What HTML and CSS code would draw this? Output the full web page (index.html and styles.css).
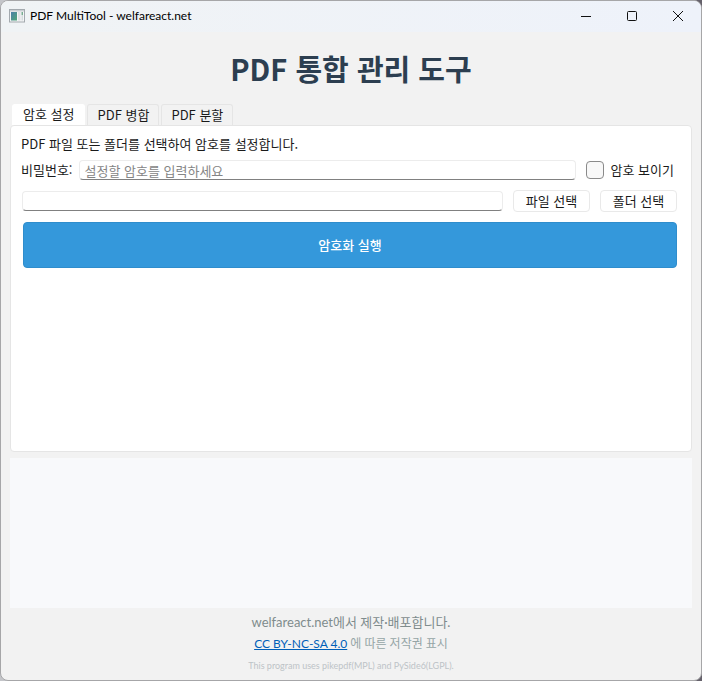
FILE: index.html
```html
<!DOCTYPE html>
<html lang="ko">
<head>
    <meta charset="UTF-8">
    <meta name="viewport" content="width=device-width, initial-scale=1.0">
    <title>PDF MultiTool - welfareact.net</title>
    <link rel="stylesheet" href="styles.css">
</head>
<body>
    <div class="window">
        <header class="titlebar">
            <svg class="app-icon" width="16" height="14" viewBox="0 0 16 14" aria-hidden="true">
                <defs>
                    <linearGradient id="screen" x1="0" y1="0" x2="1" y2="1">
                        <stop offset="0" stop-color="#4a7fa8"/>
                        <stop offset="1" stop-color="#4fa577"/>
                    </linearGradient>
                </defs>
                <rect x="0.5" y="0.5" width="15" height="12.5" fill="#f4f5f6" stroke="#a3a9ae"/>
                <rect x="1" y="1" width="14" height="1.5" fill="#c9ced2"/>
                <rect x="2" y="3" width="6" height="8.5" fill="url(#screen)"/>
                <rect x="9" y="3" width="2.5" height="8.5" fill="#dfe2e4"/>
                <rect x="12.5" y="3" width="1.5" height="3" fill="#78ad91"/>
                <rect x="12.5" y="6" width="1.5" height="5.5" fill="#d5dcdd"/>
            </svg>
            <span class="window-title">PDF MultiTool - welfareact.net</span>
            <div class="window-controls">
                <button type="button" aria-label="최소화">
                    <svg width="10" height="10" viewBox="0 0 10 10"><path d="M0 5.5H10"/></svg>
                </button>
                <button type="button" aria-label="최대화">
                    <svg width="10" height="10" viewBox="0 0 10 10"><rect x="0.5" y="0.5" width="9" height="9" rx="1"/></svg>
                </button>
                <button type="button" aria-label="닫기">
                    <svg width="10" height="10" viewBox="0 0 10 10"><path d="M0 0L10 10M10 0L0 10"/></svg>
                </button>
            </div>
        </header>

        <main class="content">
            <h1>PDF 통합 관리 도구</h1>

            <div class="tabs" role="tablist">
                <button type="button" class="tab active" role="tab" id="tab-encrypt" aria-selected="true" aria-controls="panel-encrypt">암호 설정</button>
                <button type="button" class="tab" role="tab" aria-selected="false">PDF 병합</button>
                <button type="button" class="tab" role="tab" aria-selected="false">PDF 분할</button>
            </div>

            <section class="panel" role="tabpanel" id="panel-encrypt" aria-labelledby="tab-encrypt">
                <p class="description">PDF 파일 또는 폴더를 선택하여 암호를 설정합니다.</p>
                <div class="row password-row">
                    <label for="password">비밀번호:</label>
                    <input type="password" class="text-input" id="password" placeholder="설정할 암호를 입력하세요">
                    <label class="show-password"><input type="checkbox" id="show-password">암호 보이기</label>
                </div>
                <div class="row file-row">
                    <input type="text" class="text-input" aria-label="선택한 경로" readonly>
                    <button type="button" class="select-button">파일 선택</button>
                    <button type="button" class="select-button">폴더 선택</button>
                </div>
                <button type="button" class="run-button">암호화 실행</button>
            </section>

            <div class="log" role="log"></div>
        </main>

        <footer class="footer">
            <p class="credit">welfareact.net에서 제작·배포합니다.</p>
            <p class="license"><a href="https://creativecommons.org/licenses/by-nc-sa/4.0/">CC BY-NC-SA 4.0</a> 에 따른 저작권 표시</p>
            <p class="libraries">This program uses pikepdf(MPL) and PySide6(LGPL).</p>
        </footer>
    </div>

    <script>
        document.getElementById("show-password").addEventListener("change", function () {
            document.getElementById("password").type = this.checked ? "text" : "password";
        });
    </script>
</body>
</html>
```
FILE: styles.css
```css
* {
    box-sizing: border-box;
}
body {
    margin: 0;
    background: linear-gradient(to right, #c4c5c9 70%, #65616b 70%);
    font-family: "Noto Sans CJK KR", sans-serif;
    font-size: 13px;
    line-height: 20px;
    color: #1a1a1a;
}
h1, p {
    margin: 0;
}
button, input {
    font: inherit;
    color: inherit;
}
.window {
    display: flex;
    flex-direction: column;
    min-height: 100vh;
    border: 1px solid #a6a6a8;
    border-radius: 8px;
    background-color: #f2f2f2;
    overflow: hidden;
}
.titlebar {
    display: flex;
    align-items: center;
    height: 31px;
    padding: 0 0 2px 8px;
    background: linear-gradient(to right, #f0f3f5, #eef2fa);
}
.app-icon {
    margin-right: 5px;
}
.window-title {
    font-family: Lato, "Noto Sans CJK KR", sans-serif;
    font-size: 12px;
    color: #000;
}
.window-controls {
    display: flex;
    align-self: stretch;
    margin-left: auto;
}
.window-controls button {
    display: flex;
    align-items: center;
    justify-content: center;
    width: 46px;
    padding: 0;
    border: none;
    background: none;
}
.window-controls svg {
    fill: none;
    stroke: #111;
    overflow: visible;
}
.content {
    display: flex;
    flex-direction: column;
    flex: 1;
    padding: 0 9px;
}
h1 {
    padding: 16px 0;
    font-size: 29px;
    font-weight: bold;
    line-height: 40px;
    text-align: center;
    color: #2c3e50;
}
.tabs {
    display: flex;
    gap: 2px;
    padding-left: 2px;
}
.tab {
    height: 21px;
    padding: 0 9px;
    border: 1px solid #e5e5e5;
    border-bottom: none;
    border-radius: 3px 3px 0 0;
    background-color: #f2f2f2;
    line-height: 20px;
}
.tab.active {
    padding: 0 10px 2px;
    border-color: #fff;
    background-color: #fff;
    line-height: 18px;
}
.panel {
    display: flex;
    flex-direction: column;
    flex: 1;
    padding: 8px 14px 8px 10px;
    border: 1px solid #e5e5e5;
    border-radius: 4px;
    background-color: #fff;
}
.row {
    display: flex;
    align-items: center;
}
.password-row {
    gap: 7px;
    margin-top: 6px;
    padding-right: 3px;
}
.text-input {
    flex: 1;
    min-width: 0;
    height: 20px;
    padding: 0 4px;
    border: 1px solid #ececec;
    border-bottom-color: #808080;
    border-radius: 4px;
    background-color: #fff;
    line-height: 18px;
}
.text-input::placeholder {
    color: #858585;
}
.show-password {
    display: flex;
    align-items: center;
    gap: 7px;
    margin-left: 3px;
}
.show-password input {
    appearance: none;
    width: 18px;
    height: 18px;
    margin: 0;
    border: 1px solid #8a8a8a;
    border-radius: 4px;
    background-color: #f8f8f8;
}
.show-password input:checked {
    background-color: #3498db;
}
.file-row {
    gap: 10px;
    margin: 10px 0 10px 1px;
}
.select-button {
    width: 77px;
    height: 22px;
    padding: 0;
    border: 1px solid #e9e9e9;
    border-radius: 4px;
    background-color: #fff;
    line-height: 20px;
}
.run-button {
    height: 46px;
    margin-left: 2px;
    border: 1px solid #2f8dcc;
    border-radius: 4px;
    background-color: #3498db;
    font-weight: 500;
    color: #fff;
}
.log {
    height: 150px;
    margin-top: 6px;
    background-color: #f8f9fb;
}
.footer {
    padding: 4px 0;
    font-family: Lato, "Noto Sans CJK KR", sans-serif;
    text-align: center;
}
.credit {
    color: #7f8c8d;
}
.license {
    margin-top: 2px;
    font-size: 12px;
    color: #95a5a6;
}
.license a {
    color: #005fb8;
}
.libraries {
    margin-top: 2px;
    font-size: 9px;
    color: #bdc3c7;
}
```
